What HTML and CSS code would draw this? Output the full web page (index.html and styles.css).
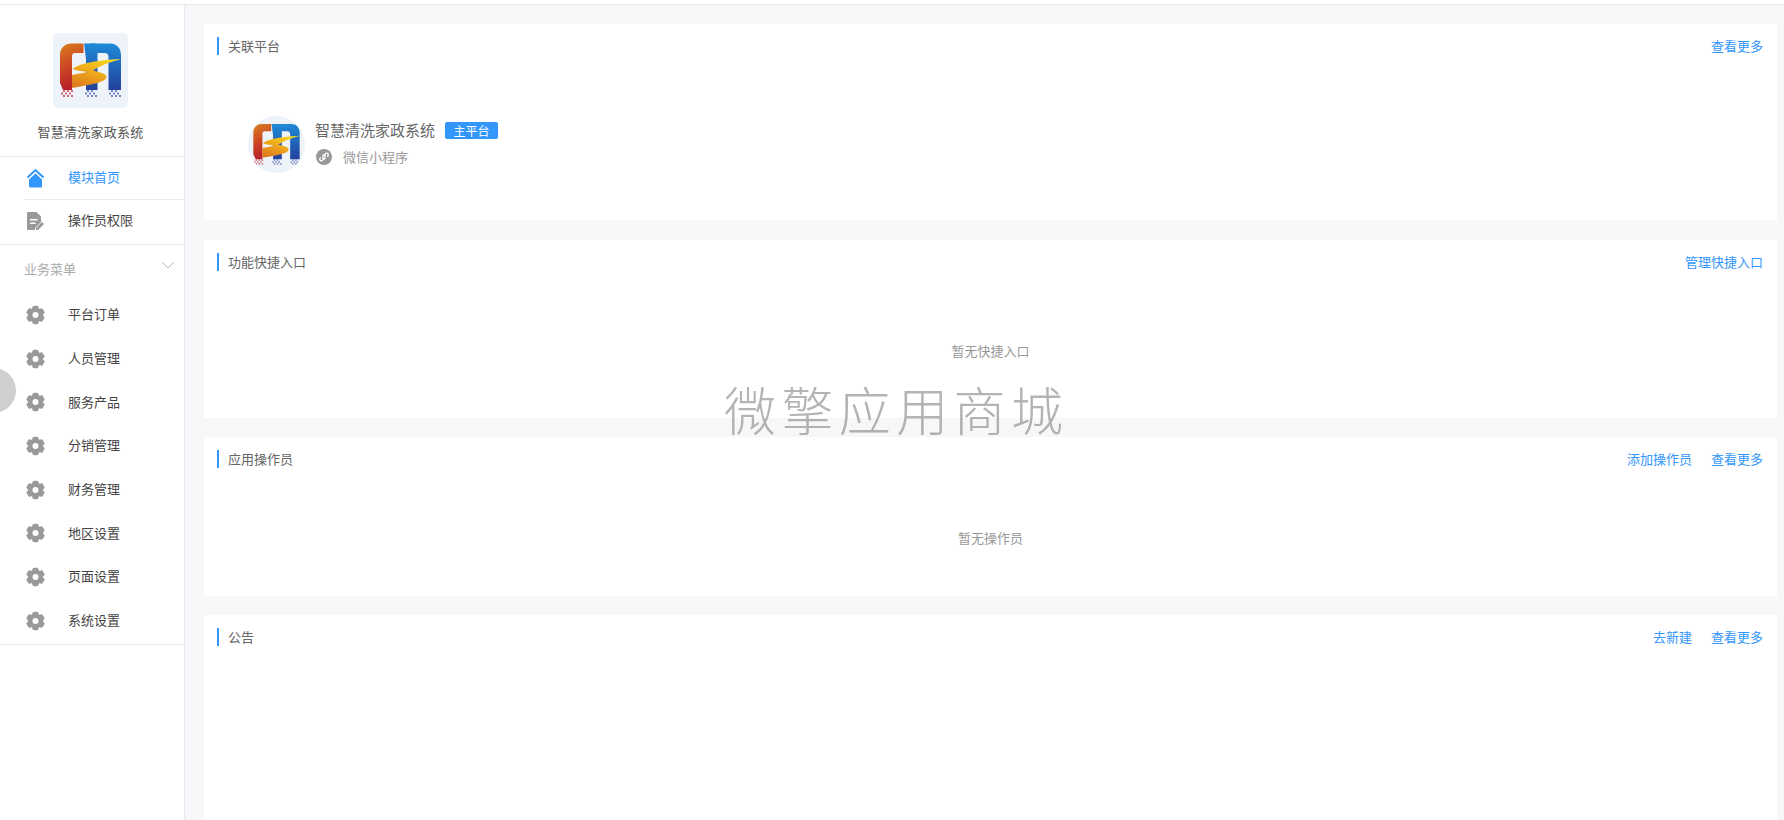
FILE: index.html
```html
<!DOCTYPE html>
<html lang="zh-CN">
<head>
<meta charset="utf-8">
<title>智慧清洗家政系统</title>
<link rel="stylesheet" href="styles.css">
</head>
<body>
<svg class="defs" width="0" height="0" aria-hidden="true">
  <defs>
    <linearGradient id="gRed" x1="0" y1="0" x2="0.25" y2="1">
      <stop offset="0" stop-color="#d9801f"/>
      <stop offset="0.45" stop-color="#cf4f22"/>
      <stop offset="1" stop-color="#b71f2a"/>
    </linearGradient>
    <linearGradient id="gBlue" x1="0" y1="0" x2="0" y2="1">
      <stop offset="0" stop-color="#1f8ad8"/>
      <stop offset="1" stop-color="#23409c"/>
    </linearGradient>
    <linearGradient id="gGold" x1="0.8" y1="0" x2="0.2" y2="1">
      <stop offset="0" stop-color="#f6dc1e"/>
      <stop offset="0.5" stop-color="#efa91a"/>
      <stop offset="1" stop-color="#dd7a1e"/>
    </linearGradient>
    <symbol id="logo" viewBox="0 0 75 75">
      <path fill="url(#gBlue)" d="M31 10.500H43L44.500 20V57H33V26Z"/>
      <path fill="url(#gBlue)" d="M37 10.500H57C63.500 10.500 68 15 68 22V57H55.500V24C55.500 21.500 54 20 52 20H44.500Z"/>
      <path fill="url(#gRed)" d="M7 22C7 15 12 10.500 18.500 10.500H30.500V20H22C20 20 19 21 19 23V57H10L7 50Z"/>
      <path fill="url(#gGold)" d="M68 26C56 26.500 41 28 30 31C26 32 22 34 19.500 36C25 38 30 38.500 35 39C29 40 24 41 19 42V55C34 52 53 50 53.500 44C53.800 40.500 45 39 40 37.500C48 32 58 29 68 26Z"/>
      <g fill="#c23b48" opacity=".75">
        <rect x="10" y="57" width="2" height="2"/><rect x="14" y="57" width="2" height="2"/><rect x="18" y="57" width="2" height="2"/>
        <rect x="8" y="59.500" width="2" height="2"/><rect x="12" y="59.500" width="2" height="2"/><rect x="16" y="59.500" width="2" height="2"/>
        <rect x="10" y="62" width="2" height="2"/><rect x="14" y="62" width="2" height="2"/><rect x="18" y="62" width="2" height="2"/>
      </g>
      <g fill="#4d62ad" opacity=".75">
        <rect x="34" y="57" width="2" height="2"/><rect x="38" y="57" width="2" height="2"/><rect x="32" y="59.500" width="2" height="2"/>
        <rect x="36" y="59.500" width="2" height="2"/><rect x="40" y="59.500" width="2" height="2"/><rect x="34" y="62" width="2" height="2"/>
        <rect x="38" y="62" width="2" height="2"/><rect x="42" y="62" width="2" height="2"/>
        <rect x="58" y="57" width="2" height="2"/><rect x="62" y="57" width="2" height="2"/><rect x="56" y="59.500" width="2" height="2"/>
        <rect x="60" y="59.500" width="2" height="2"/><rect x="64" y="59.500" width="2" height="2"/><rect x="58" y="62" width="2" height="2"/>
        <rect x="62" y="62" width="2" height="2"/><rect x="66" y="62" width="2" height="2"/>
      </g>
    </symbol>
    <symbol id="gear" viewBox="-9.500 -9.500 19 19">
      <g fill="#999">
        <circle r="7.500"/>
        <rect x="-3.100" y="-9.300" width="6.200" height="18.600" rx="1.800"/>
        <rect x="-3.100" y="-9.300" width="6.200" height="18.600" rx="1.800" transform="rotate(60)"/>
        <rect x="-3.100" y="-9.300" width="6.200" height="18.600" rx="1.800" transform="rotate(120)"/>
      </g>
      <circle r="3" fill="#fff"/>
    </symbol>
  </defs>
</svg>

<div class="topline"></div>
<div class="layout">
  <aside class="sidebar">
    <div class="brand">
      <svg class="brand-logo"><use href="#logo"/></svg>
      <div class="brand-name">智慧清洗家政系统</div>
    </div>
    <nav class="nav-top">
      <a class="nav-item first active">
        <svg class="nav-icon" viewBox="0 0 18 20"><path d="M1 9.500L9 2L17 9.500" fill="none" stroke="#3296fa" stroke-width="2"/><path fill="#3296fa" d="M9 5.500L15.500 11.500V18C15.500 19 15 19.500 14 19.500H4C3 19.500 2.500 19 2.500 18V11.500Z"/></svg>
        <span>模块首页</span>
      </a>
      <a class="nav-item second">
        <svg class="nav-icon" viewBox="0 0 18 20"><path fill="#999" d="M2 1H10L14.500 5.500V11L8.500 17V19H2C1 19 .5 18.500 .5 17.500V2.500C.5 1.500 1 1 2 1Z"/><path fill="#fff" d="M3.500 8H11V9.500H3.500ZM3.500 11.500H9V13H3.500Z"/><path fill="#999" d="M15.500 11L17.500 13L11.500 19H9.500V17Z"/></svg>
        <span>操作员权限</span>
      </a>
    </nav>
    <div class="nav-group">
      <div class="group-head">
        <span>业务菜单</span>
        <svg class="chev" viewBox="0 0 12 7"><path d="M.5 .5L6 6L11.500 .5" fill="none" stroke="#b0b0b0"/></svg>
      </div>
      <a class="nav-item row"><svg class="nav-icon gear"><use href="#gear"/></svg><span>平台订单</span></a>
      <a class="nav-item row"><svg class="nav-icon gear"><use href="#gear"/></svg><span>人员管理</span></a>
      <a class="nav-item row"><svg class="nav-icon gear"><use href="#gear"/></svg><span>服务产品</span></a>
      <a class="nav-item row"><svg class="nav-icon gear"><use href="#gear"/></svg><span>分销管理</span></a>
      <a class="nav-item row"><svg class="nav-icon gear"><use href="#gear"/></svg><span>财务管理</span></a>
      <a class="nav-item row"><svg class="nav-icon gear"><use href="#gear"/></svg><span>地区设置</span></a>
      <a class="nav-item row"><svg class="nav-icon gear"><use href="#gear"/></svg><span>页面设置</span></a>
      <a class="nav-item row"><svg class="nav-icon gear"><use href="#gear"/></svg><span>系统设置</span></a>
    </div>
  </aside>

  <main class="main">
    <section class="card card-platform">
      <header class="card-head">
        <h2 class="card-title">关联平台</h2>
        <div class="card-links"><a>查看更多</a></div>
      </header>
      <div class="platform">
        <svg class="platform-logo"><use href="#logo"/></svg>
        <div class="platform-info">
          <div class="platform-name"><span>智慧清洗家政系统</span><em class="badge">主平台</em></div>
          <div class="platform-type">
            <svg class="mini-icon" viewBox="0 0 16 16"><circle cx="8" cy="8" r="8" fill="#999"/><path d="M7 6.800V10C7 11.100 6.200 11.800 5.300 11.800C4.400 11.800 3.700 11.100 3.700 10.200C3.700 9.400 4.200 8.800 5 8.600M9 9.200V6C9 4.900 9.800 4.200 10.700 4.200C11.600 4.200 12.300 4.900 12.300 5.800C12.300 6.600 11.800 7.200 11 7.400M7 7C7 6 8 5.500 9 6M9 9C9 10 8 10.500 7 10" fill="none" stroke="#fff" stroke-width="1.300"/></svg>
            <span>微信小程序</span>
          </div>
        </div>
      </div>
    </section>

    <section class="card card-shortcut">
      <header class="card-head">
        <h2 class="card-title">功能快捷入口</h2>
        <div class="card-links"><a>管理快捷入口</a></div>
      </header>
      <p class="empty empty-shortcut">暂无快捷入口</p>
    </section>

    <section class="card card-operator">
      <header class="card-head">
        <h2 class="card-title">应用操作员</h2>
        <div class="card-links"><a>添加操作员</a><a>查看更多</a></div>
      </header>
      <p class="empty empty-operator">暂无操作员</p>
    </section>

    <section class="card card-notice">
      <header class="card-head">
        <h2 class="card-title">公告</h2>
        <div class="card-links"><a>去新建</a><a>查看更多</a></div>
      </header>
    </section>
  </main>
</div>

<div class="side-handle"></div>
<div class="watermark">微擎应用商城</div>
</body>
</html>
```

FILE: styles.css
```css
* { box-sizing: border-box; }
html, body { height: 100%; }
body {
  margin: 0;
  height: 820px;
  overflow: hidden;
  background: #fff;
  color: #333;
  font-family: "Noto Sans CJK SC", "Noto Sans", sans-serif;
  font-size: 13px;
  position: relative;
}
a { text-decoration: none; color: inherit; }
.defs { position: absolute; }

.topline { height: 5px; border-bottom: 1px solid #e6e8eb; }
.layout { display: flex; height: 815px; }

.sidebar { width: 185px; flex: none; border-right: 1px solid #e9ebee; background: #fff; }
.brand {
  height: 152px;
  padding: 28px 3px 0 0;
  border-bottom: 1px solid #e9ebee;
  display: flex;
  flex-direction: column;
  align-items: center;
}
.brand-logo { width: 75px; height: 75px; background: #eef2f9; border-radius: 5px; display: block; }
.brand-name { margin-top: 14px; line-height: 20px; color: #555; letter-spacing: .25px; }

.nav-top { border-bottom: 1px solid #e9ebee; padding-bottom: 3px; }
.nav-item { display: flex; align-items: center; padding-left: 26px; color: #444; }
.nav-item .nav-icon { width: 19px; height: 20px; flex: none; margin-right: 23px; }
.nav-item.first { height: 42px; }
.nav-item.first span { margin-bottom: 3px; }
.nav-item.second { height: 42px; position: relative; border-top: 1px solid #e9ebee; margin-left: 24px; padding-left: 2px; }
.nav-item.second span { margin-bottom: 2px; }
.nav-item.active { color: #3296fa; }

.nav-group { border-bottom: 1px solid #e9ebee; padding-bottom: 2px; }
.group-head {
  height: 47px;
  padding: 0 10px 0 24px;
  display: flex;
  align-items: center;
  justify-content: space-between;
  color: #aaa;
}
.chev { width: 12px; height: 7px; margin-bottom: 6px; }
.nav-item.row { height: 43.700px; }
.nav-item .gear { margin-top: 2px; }

.main {
  flex: 1;
  min-width: 0;
  background: #f6f7f9;
  padding: 19px 7px 0 19px;
  display: flex;
  flex-direction: column;
  gap: 19px;
  overflow: hidden;
}
.card { background: #fff; flex: none; }
.card-platform { height: 196px; margin-bottom: 1px; }
.card-shortcut { height: 178px; }
.card-operator { height: 159px; }
.card-notice { height: 300px; }

.card-head {
  display: flex;
  justify-content: space-between;
  align-items: center;
  height: 18px;
  margin: 13px 14px 0 13px;
}
.card-title {
  margin: 0;
  font-size: 13px;
  font-weight: 400;
  line-height: 18px;
  color: #666;
  border-left: 2px solid #3296fa;
  padding-left: 9px;
}
.card-links { display: flex; gap: 19px; color: #3296fa; line-height: 18px; }

.platform { display: flex; align-items: center; margin: 61px 0 0 44px; }
.platform-logo { width: 57px; height: 57px; border-radius: 50%; background: #eef2f9; flex: none; margin-right: 10px; }
.platform-info { display: flex; flex-direction: column; gap: 8px; margin-bottom: 3px; }
.platform-name { display: flex; align-items: center; font-size: 15px; line-height: 20px; color: #666; }
.badge {
  font-style: normal;
  font-size: 12px;
  line-height: 17px;
  height: 17px;
  width: 53px;
  text-align: center;
  margin-left: 10px;
  background: #3296fa;
  color: #fff;
  border-radius: 2px;
}
.platform-type { display: flex; align-items: center; color: #999; line-height: 18px; padding-left: 1px; }
.mini-icon { width: 16px; height: 16px; margin-right: 11px; flex: none; }

.empty { margin: 0; text-align: center; color: #999; line-height: 18px; }
.empty-shortcut { padding-top: 71px; }
.empty-operator { padding-top: 61px; font-size: 13px; }

.side-handle {
  position: absolute;
  left: -29px;
  top: 368px;
  width: 45px;
  height: 45px;
  border-radius: 50%;
  background: #cfcfcf;
}
.watermark {
  position: absolute;
  left: 724px;
  top: 374px;
  font-size: 52px;
  font-weight: 300;
  line-height: 70px;
  letter-spacing: 5.400px;
  color: rgba(130, 130, 130, .6);
  white-space: nowrap;
}
```
